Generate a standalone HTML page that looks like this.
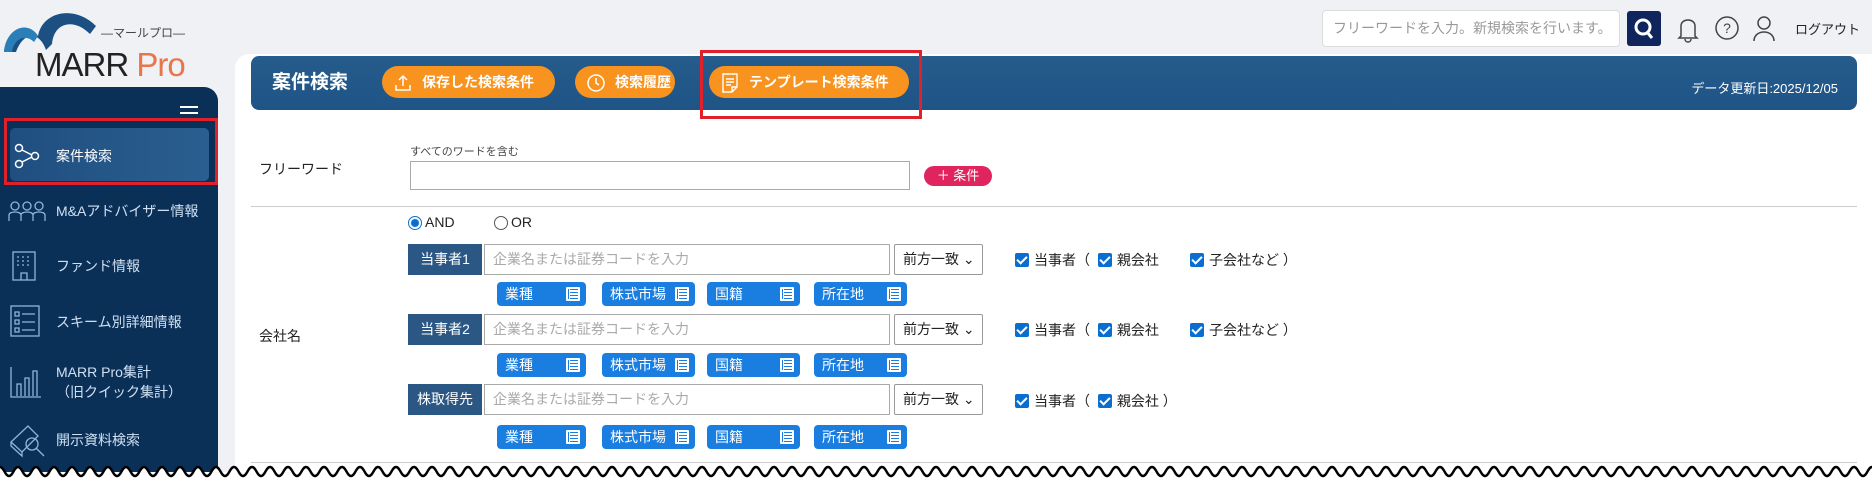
<!DOCTYPE html>
<html><head><meta charset="utf-8"><style>
*{box-sizing:border-box;margin:0;padding:0}
html,body{width:1872px;height:481px;overflow:hidden}
body{background:#f0f1f5;font-family:"Liberation Sans","Noto Sans CJK JP",sans-serif;position:relative;color:#222}
.a{position:absolute}
.side{left:0;top:87px;width:218px;height:385px;background:#0b3058;border-radius:0 14px 0 0}
.mi{position:absolute;left:56px;color:#fff;font-size:14px;white-space:nowrap}
.panel{left:235px;top:54px;width:1637px;height:418px;background:#fff;border-radius:14px 0 0 0}
.hdr{left:251px;top:56px;width:1606px;height:54px;background:linear-gradient(#255c8c,#1f5486);border-radius:8px}
.ob{position:absolute;top:66px;height:32px;background:#f7931e;border-radius:16px;color:#fff;font-size:14px;font-weight:bold;line-height:32px;padding-left:40px}
.red{position:absolute;border:3px solid #e0202a}
.lab{position:absolute;background:#2a5783;color:#fff;font-size:14px;text-align:center;line-height:31px;height:31px;width:74px;left:408px}
.inp{position:absolute;left:484px;width:406px;height:31px;border:1px solid #aaa;color:#aaa;font-size:14px;line-height:29px;padding-left:8px}
.sel{position:absolute;left:894px;width:89px;height:31px;border:1px solid #999;border-radius:2px;font-size:14px;line-height:29px;padding-left:8px}
.chip{position:absolute;height:24px;background:#1a7ee0;border-radius:4px;color:#fff;font-size:14px;line-height:24px;padding-left:8px}
.chip i{position:absolute;right:6px;top:5px;width:14px;height:14px;background:#fff;border-radius:1px}
.chip i:before{content:"";position:absolute;left:4px;top:2px;width:8px;height:10px;background:repeating-linear-gradient(#1a7ee0 0 1px,#fff 1px 3px)}
.chip i:after{content:"";position:absolute;left:2px;top:2px;width:1px;height:10px;background:#1a7ee0}
.cb{position:absolute;font-size:14px;white-space:nowrap}
.cb b{display:inline-block;width:14px;height:14px;background:#0a6ed1;border-radius:2px;vertical-align:-2px;margin-right:5px;position:relative}
.cb b:after{content:"";position:absolute;left:4px;top:1px;width:4px;height:8px;border:solid #fff;border-width:0 2px 2px 0;transform:rotate(45deg)}
</style></head><body>
<!-- logo -->
<svg class="a" style="left:0;top:4px" width="100" height="50" viewBox="0 0 100 50"><path d="M4 48 C6 24,28 16,38 32 C42 8,74 0,96 22 L90 30 C74 14,54 18,52 40 L46 46 C40 28,24 26,16 48Z" fill="#1c4f82"/><path d="M4 48 C6 24,28 16,38 32 L34 38 C26 30,14 34,12 48Z" fill="#2a7fb8"/></svg>
<div class="a" style="left:101px;top:24px;font-size:12px;color:#444">—マールプロ—</div>
<div class="a" style="left:35px;top:46px;font-size:33px;color:#222;letter-spacing:-1px">MARR <span style="color:#e8764a">Pro</span></div>
<!-- top right -->
<div class="a" style="left:1322px;top:10px;width:298px;height:37px;background:#fff;border:1px solid #ddd;border-radius:4px;color:#999;font-size:14px;line-height:35px;padding-left:10px">フリーワードを入力。新規検索を行います。</div>
<div class="a" style="left:1627px;top:11px;width:34px;height:35px;background:#10245e;border-radius:3px"><svg width="34" height="35"><circle cx="16" cy="16" r="7" stroke="#fff" stroke-width="3" fill="none"/><path d="M20 21 L25 27" stroke="#fff" stroke-width="3"/></svg></div>
<svg class="a" style="left:1676px;top:14px" width="24" height="30"><path d="M5 22 L5 12 C5 4,19 4,19 12 L19 22 L21 24 L3 24Z M9 25 C9 29,15 29,15 25" stroke="#444" stroke-width="1.5" fill="none"/></svg>
<svg class="a" style="left:1714px;top:15px" width="26" height="26"><circle cx="13" cy="13" r="11" stroke="#444" stroke-width="1.5" fill="none"/><text x="13" y="18" font-size="14" text-anchor="middle" fill="#444" font-family="Liberation Sans">?</text></svg>
<svg class="a" style="left:1752px;top:14px" width="24" height="28"><circle cx="12" cy="9" r="6" stroke="#444" stroke-width="1.5" fill="none"/><path d="M2 27 C2 15,22 15,22 27" stroke="#444" stroke-width="1.5" fill="none"/></svg>
<div class="a" style="left:1795px;top:19px;font-size:13px">ログアウト</div>
<!-- sidebar -->
<div class="a side"></div>
<div class="a" style="left:180px;top:106px;width:18px;height:2px;background:#fff;box-shadow:0 6px 0 #fff,0 12px 0 #fff"></div>
<div class="a" style="left:10px;top:128px;width:199px;height:53px;background:linear-gradient(90deg,#1f4f80,#2b5e90);border-radius:5px"></div>
<div class="red" style="left:4px;top:118px;width:214px;height:67px"></div>
<svg class="a" style="left:14px;top:143px" width="26" height="26"><circle cx="5" cy="5" r="3.5" stroke="#fff" stroke-width="1.5" fill="none"/><circle cx="21" cy="13" r="3.5" stroke="#fff" stroke-width="1.5" fill="none"/><circle cx="5" cy="21" r="3.5" stroke="#fff" stroke-width="1.5" fill="none"/><path d="M8 7 L18 12 M8 19 L18 14" stroke="#fff" stroke-width="1.5"/></svg>
<div class="mi" style="top:146px">案件検索</div>
<svg class="a" style="left:8px;top:200px" width="38" height="22" stroke="#8fb5dc" fill="none" stroke-width="1.3"><circle cx="7" cy="6" r="4"/><circle cx="19" cy="6" r="4"/><circle cx="31" cy="6" r="4"/><path d="M1 21 V15 C1 11,13 11,13 15 V21 M13 21 V15 C13 11,25 11,25 15 V21 M25 21 V15 C25 11,37 11,37 15 V21"/></svg>
<div class="mi" style="top:201px;color:#cfe0f2">M&amp;Aアドバイザー情報</div>
<svg class="a" style="left:12px;top:251px" width="24" height="30" stroke="#8fb5dc" fill="none" stroke-width="1.3"><rect x="1" y="1" width="22" height="28"/><path d="M5 6h2M10 6h2M15 6h2M5 10h2M10 10h2M15 10h2M5 14h2M10 14h2M15 14h2M9 29 V22 H15 V29"/></svg>
<div class="mi" style="top:256px;color:#cfe0f2">ファンド情報</div>
<svg class="a" style="left:10px;top:305px" width="30" height="32" stroke="#8fb5dc" fill="none" stroke-width="1.3"><rect x="1" y="1" width="28" height="30"/><path d="M5 7h4v4h-4zM5 15h4v4h-4zM5 23h4v4h-4zM12 9h13M12 17h13M12 25h13"/></svg>
<div class="mi" style="top:312px;color:#cfe0f2">スキーム別詳細情報</div>
<svg class="a" style="left:10px;top:366px" width="32" height="32" stroke="#8fb5dc" fill="none" stroke-width="1.3"><path d="M1 1 V31 H31 M7 30 V18 H11 V30 M15 30 V12 H19 V30 M23 30 V5 H27 V30"/></svg>
<div class="mi" style="top:362px;color:#cfe0f2">MARR Pro集計</div>
<div class="mi" style="top:382px;color:#cfe0f2">（旧クイック集計）</div>
<svg class="a" style="left:8px;top:420px" width="40" height="40" stroke="#8fb5dc" fill="none" stroke-width="1.3"><path d="M3 22 L20 6 L30 16 L14 32Z M3 22 L3 26 L14 36 L14 32"/><circle cx="24" cy="24" r="6"/><path d="M28 28 L36 36"/></svg>
<div class="mi" style="top:430px;color:#cfe0f2">開示資料検索</div>
<!-- panel -->
<div class="a panel"></div>
<div class="a hdr"></div>
<div class="a" style="left:272px;top:67px;color:#fff;font-size:19px;font-weight:bold">案件検索</div>
<div class="ob" style="left:382px;width:173px">保存した検索条件<svg class="a" style="left:12px;top:8px" width="18" height="18" stroke="#fff" fill="none" stroke-width="1.5"><path d="M9 12 V2 M5 6 L9 2 L13 6 M2 11 V16 H16 V11"/></svg></div>
<div class="ob" style="left:575px;width:100px">検索履歴<svg class="a" style="left:11px;top:7px" width="20" height="20" stroke="#fff" fill="none" stroke-width="1.5"><circle cx="10" cy="10" r="8"/><path d="M10 5 V10 L13 12"/></svg></div>
<div class="ob" style="left:709px;width:200px">テンプレート検索条件<svg class="a" style="left:12px;top:7px" width="18" height="20" stroke="#fff" fill="none" stroke-width="1.4"><path d="M2 1 H16 V14 L11 19 H2Z M11 19 V14 H16 M5 6h8M5 9h8M5 12h5"/></svg></div>
<div class="red" style="left:700px;top:50px;width:222px;height:69px"></div>
<div class="a" style="left:1676px;top:78px;color:#fff;font-size:13px;width:162px;text-align:right">データ更新日:2025/12/05</div>
<!-- free word -->
<div class="a" style="left:259px;top:159px;font-size:14px">フリーワード</div>
<div class="a" style="left:410px;top:143px;font-size:11px;color:#444">すべてのワードを含む</div>
<div class="a" style="left:410px;top:161px;width:500px;height:29px;border:1px solid #aaa"></div>
<div class="a" style="left:924px;top:166px;width:68px;height:20px;background:#e0245e;border-radius:10px;color:#fff;font-size:13px;line-height:20px;text-align:center">＋ 条件</div>
<div class="a" style="left:251px;top:206px;width:1606px;height:1px;background:#ccc"></div>
<!-- radios -->
<div class="a" style="left:408px;top:216px;width:14px;height:14px;border-radius:50%;border:1px solid #0a6ed1;background:radial-gradient(#0a6ed1 0 3.5px,#fff 4.5px)"></div>
<div class="a" style="left:425px;top:214px;font-size:14px">AND</div>
<div class="a" style="left:494px;top:216px;width:14px;height:14px;border-radius:50%;border:1px solid #555"></div>
<div class="a" style="left:511px;top:214px;font-size:14px">OR</div>
<div class="a" style="left:259px;top:326px;font-size:14px">会社名</div>
<!-- rows -->
<div class="lab" style="top:244px">当事者1</div><div class="inp" style="top:244px">企業名または証券コードを入力</div><div class="sel" style="top:244px">前方一致 ⌄</div>
<div class="cb" style="left:1015px;top:250px"><b></b>当事者（ <b style="margin-left:4px"></b>親会社</div><div class="cb" style="left:1190px;top:250px"><b></b>子会社など ）</div>
<div class="lab" style="top:314px">当事者2</div><div class="inp" style="top:314px">企業名または証券コードを入力</div><div class="sel" style="top:314px">前方一致 ⌄</div>
<div class="cb" style="left:1015px;top:320px"><b></b>当事者（ <b style="margin-left:4px"></b>親会社</div><div class="cb" style="left:1190px;top:320px"><b></b>子会社など ）</div>
<div class="lab" style="top:384px">株取得先</div><div class="inp" style="top:384px">企業名または証券コードを入力</div><div class="sel" style="top:384px">前方一致 ⌄</div>
<div class="cb" style="left:1015px;top:391px"><b></b>当事者（ <b style="margin-left:4px"></b>親会社 ）</div>
<!-- chips -->
<div class="chip" style="left:497px;top:282px;width:89px">業種<i></i></div><div class="chip" style="left:602px;top:282px;width:93px">株式市場<i></i></div><div class="chip" style="left:707px;top:282px;width:93px">国籍<i></i></div><div class="chip" style="left:814px;top:282px;width:93px">所在地<i></i></div>
<div class="chip" style="left:497px;top:353px;width:89px">業種<i></i></div><div class="chip" style="left:602px;top:353px;width:93px">株式市場<i></i></div><div class="chip" style="left:707px;top:353px;width:93px">国籍<i></i></div><div class="chip" style="left:814px;top:353px;width:93px">所在地<i></i></div>
<div class="chip" style="left:497px;top:425px;width:89px">業種<i></i></div><div class="chip" style="left:602px;top:425px;width:93px">株式市場<i></i></div><div class="chip" style="left:707px;top:425px;width:93px">国籍<i></i></div><div class="chip" style="left:814px;top:425px;width:93px">所在地<i></i></div>
<div class="a" style="left:251px;top:462px;width:1606px;height:1px;background:#ccc"></div>
<!-- torn edge -->
<div class="a" style="left:0;top:472px;width:1872px;height:20px;background:#fff"></div>
<svg class="a" style="left:0;top:462px" width="1872" height="19">
<defs><pattern id="w" x="0" y="0" width="18" height="19" patternUnits="userSpaceOnUse"><path d="M0 5 C4 5,5 14,9 14 C13 14,14 5,18 5 L18 19 L0 19Z" fill="#fff"/><path d="M0 5 C4 5,5 14,9 14 C13 14,14 5,18 5" stroke="#000" stroke-width="2.4" fill="none"/></pattern></defs>
<rect width="1872" height="19" fill="url(#w)"/></svg>
</body></html>
